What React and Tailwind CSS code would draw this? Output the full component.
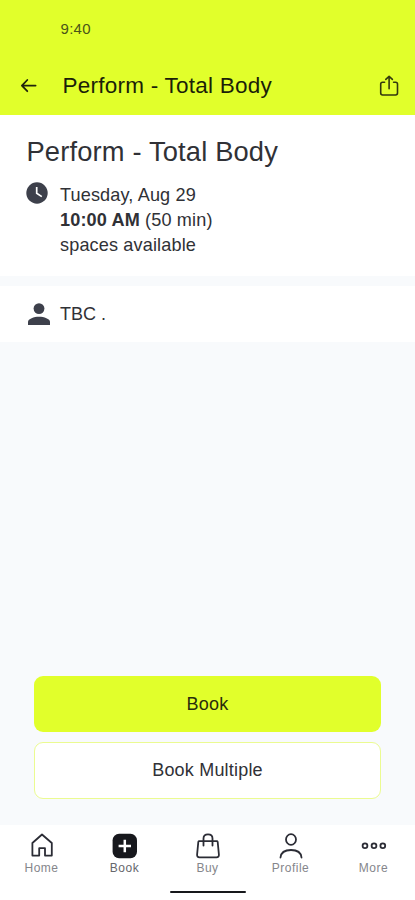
function BackArrow() {
  return (
    <svg className="h-6 w-6" viewBox="0 0 24 24" fill="none" stroke="#20240c" strokeWidth="1.8" strokeLinecap="round" strokeLinejoin="round">
      <path d="M18.6 11.6H5.3M10.3 6L4.9 11.6L10.3 17.2" />
    </svg>
  );
}

function ShareIcon() {
  return (
    <svg className="h-6 w-6" viewBox="0 0 24 24" fill="none" stroke="#33390f" strokeWidth="1.6" strokeLinecap="round" strokeLinejoin="round">
      <path d="M7.6 8.2H5.6Q3.7 8.2 3.7 10.1V19.1Q3.7 21 5.6 21H18.6Q20.5 21 20.5 19.1V10.1Q20.5 8.2 18.6 8.2H16.6" />
      <path d="M12.1 14.8V3M8.8 5.4L12.1 2.3L15.4 5.4" />
    </svg>
  );
}

function ClockIcon() {
  return (
    <svg className="h-[22px] w-[22px]" viewBox="0 0 22 22" fill="none">
      <circle cx="11" cy="11" r="10.7" fill="#3d404b" />
      <path d="M10.7 5V11.3L15.8 14.6" stroke="#fff" strokeWidth="1.7" />
    </svg>
  );
}

function PersonIcon() {
  return (
    <svg className="h-[22px] w-[22px]" viewBox="0 0 22 22" fill="#3d404b">
      <circle cx="11" cy="5.6" r="5.4" />
      <path d="M0 22V19C0 15.8 6 13.8 11 13.8S22 15.8 22 19V22Z" />
    </svg>
  );
}

const icons = {
  Home: <path d="M4.4 11L14 2.5L23.8 11V23.6H17V16.2H11.2V23.6H4.4Z" />,
  Book: (
    <>
      <rect x="1.6" y="1.8" width="24.4" height="24.4" rx="6.5" fill="#17181d" stroke="none" />
      <path d="M13.8 7.8V20.2M7.6 14H20" stroke="#fff" strokeWidth="2.5" strokeLinecap="butt" />
    </>
  ),
  Buy: (
    <>
      <path d="M5.2 9.2H22.8Q23.5 9.2 23.7 10L24.9 22.5Q25.1 25.3 22.5 25.3H5.5Q2.9 25.3 3.1 22.5L4.3 10Q4.5 9.2 5.2 9.2Z" />
      <path d="M9.5 13.5V6.5Q9.5 2.3 14 2.3Q18.5 2.3 18.5 6.5V13.5" />
    </>
  ),
  Profile: (
    <>
      <ellipse cx="14" cy="7.5" rx="5" ry="5.3" />
      <path d="M3.5 25.5C4 20.3 7.5 18 14 18S24 20.3 24.5 25.5" />
    </>
  ),
  More: (
    <>
      <circle cx="5" cy="13.7" r="2.4" />
      <circle cx="14" cy="13.7" r="2.4" />
      <circle cx="22.8" cy="13.7" r="2.4" />
    </>
  ),
};

function NavItem({ name }) {
  return (
    <button className="flex h-full flex-1 flex-col items-center pt-[7px]">
      <svg className="h-7 w-7" viewBox="0 0 28 28" fill="none" stroke="#2b2c35" strokeWidth="1.8" strokeLinecap="round" strokeLinejoin="round">
        {icons[name]}
      </svg>
      <span className={`mt-px text-[12px] leading-[14px] tracking-[0.5px] ${name === "Book" ? "text-[#66676c]" : "text-[#85868b]"}`}>{name}</span>
    </button>
  );
}

export default function App() {
  return (
    <div className="flex h-[900px] w-[415px] flex-col overflow-hidden bg-[#f8fafc] font-['Liberation_Sans',sans-serif] text-[#303136]">
      <header className="h-[115px] shrink-0 bg-[#e1ff2b]">
        <div className="h-[57px] pt-[20px] pl-[60.5px] text-[15px] leading-[17px] tracking-[0.3px] text-[#4b5418]">9:40</div>
        <div className="flex h-[57px] items-center pr-[14px] pl-[17px]">
          <BackArrow />
          <h1 className="ml-[21.5px] flex-1 text-[22.5px] leading-7 tracking-[0.24px] text-[#1b1f08]">Perform - Total Body</h1>
          <ShareIcon />
        </div>
      </header>

      <section className="h-[161px] shrink-0 bg-white pt-[21px] pl-[26px]">
        <h2 className="pl-[0.5px] text-[27.3px] leading-8 tracking-[0.16px]">Perform - Total Body</h2>
        <div className="mt-[14px] flex">
          <ClockIcon />
          <div className="ml-[12px] pt-[0.5px] text-[18.1px] leading-[25.3px] tracking-[0.14px]">
            <p>Tuesday, Aug 29</p>
            <p><strong>10:00 AM</strong> (50 min)</p>
            <p>spaces available</p>
          </div>
        </div>
      </section>

      <section className="mt-[10px] flex h-[56px] shrink-0 items-center bg-white pl-[28px]">
        <PersonIcon />
        <span className="ml-[10px] text-[18px] leading-6">TBC .</span>
      </section>

      <main className="flex flex-1 flex-col justify-end gap-[10px] px-[34px] pb-[26px]">
        <button className="h-[56px] rounded-[9px] bg-[#e1ff2b] text-[18px] tracking-[0.2px] text-[#282d0c]">Book</button>
        <button className="h-[57px] rounded-[9px] border-[1.5px] border-[#ebfb91] bg-white text-[18px] tracking-[0.2px]">Book Multiple</button>
      </main>

      <nav className="h-[75px] shrink-0 bg-white">
        <div className="flex h-[66px]">
          <NavItem name="Home" />
          <NavItem name="Book" />
          <NavItem name="Buy" />
          <NavItem name="Profile" />
          <NavItem name="More" />
        </div>
        <div className="mx-auto h-[2px] w-[76px] rounded-full bg-[#17181b]" />
      </nav>
    </div>
  );
}
